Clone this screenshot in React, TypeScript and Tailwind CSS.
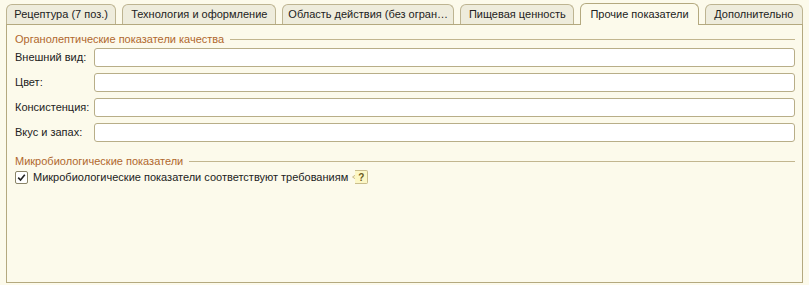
const tabs = [
  { label: "Рецептура (7 поз.)", w: 111 },
  { label: "Технология и оформление", w: 155 },
  { label: "Область действия (без огран…", w: 173 },
  { label: "Пищевая ценность", w: 115 },
  { label: "Прочие показатели", w: 119, active: true },
  { label: "Дополнительно", w: 99 },
];

const fields = ["Внешний вид:", "Цвет:", "Консистенция:", "Вкус и запах:"];

function GroupTitle({ text }: { text: string }) {
  return (
    <div className="flex items-center gap-1.5 h-[14px]">
      <span className="text-[#b0682e] whitespace-nowrap">{text}</span>
      <div className="flex-1 h-px bg-[#c2b68f]" />
    </div>
  );
}

export default function App() {
  return (
    <div
      className="w-[809px] h-[285px] bg-[#fcfaeb] text-[11px] text-[#222] pl-[6px] pr-[6px] pt-[2px]"
      style={{ fontFamily: '"Liberation Sans", Arial, sans-serif' }}
    >
      {/* tab strip */}
      <div className="flex items-end gap-[6px] h-[22px] relative z-10">
        {tabs.map((t) =>
          t.active ? (
            <div
              key={t.label}
              style={{ width: t.w }}
              className="h-[22px] -mb-px rounded-t-[6px] border border-b-0 border-[#b4a97f] bg-[#fcfaeb] flex items-center justify-center whitespace-nowrap"
            >
              {t.label}
            </div>
          ) : (
            <div
              key={t.label}
              style={{ width: t.w }}
              className="h-[20px] rounded-t-[6px] border border-b-0 border-[#bdb491] bg-[#eeecdc] flex items-center justify-center whitespace-nowrap overflow-hidden"
            >
              {t.label}
            </div>
          )
        )}
      </div>

      {/* panel */}
      <div className="h-[259px] border border-[#b4a97f] bg-[#fcfaeb] pl-[8px] pr-[7px] pt-[7px]">
        <GroupTitle text="Органолептические показатели качества" />
        <div className="mt-[2px] flex flex-col gap-[6px]">
          {fields.map((f) => (
            <div key={f} className="flex items-center h-[19px]">
              <span className="w-[79px] whitespace-nowrap">{f}</span>
              <div className="flex-1 h-[19px] rounded-[3px] border border-[#b8ae88] bg-white" />
            </div>
          ))}
        </div>

        <div className="mt-[12px]">
          <GroupTitle text="Микробиологические показатели" />
        </div>
        <div className="mt-[1px] flex items-center h-[16px]">
          <div className="w-[13px] h-[13px] rounded-[2px] border border-[#8a8468] bg-white flex items-center justify-center">
            <svg width="9" height="9" viewBox="0 0 9 9">
              <path d="M1.2 4.6 L3.5 7 L7.8 1.8" fill="none" stroke="#222" strokeWidth="1.6" />
            </svg>
          </div>
          <span className="ml-[5px] whitespace-nowrap">Микробиологические показатели соответствуют требованиям</span>
          <div className="ml-[4px] flex items-center">
            <svg width="4" height="14" viewBox="0 0 4 14" className="-mr-px">
              <path d="M4 0.5 L3.5 0.5 L3.5 5 L0.5 7 L3.5 9 L3.5 13.5 L4 13.5" fill="#fcf7c6" stroke="#c9bd8c" strokeWidth="1" />
            </svg>
            <div className="h-[14px] w-[13px] border border-l-0 border-[#c9bd8c] bg-[#fcf7c6] rounded-r-[2px] flex items-center justify-center text-[10px] font-bold text-[#6b5a20]">
              ?
            </div>
          </div>
        </div>
      </div>
    </div>
  );
}
